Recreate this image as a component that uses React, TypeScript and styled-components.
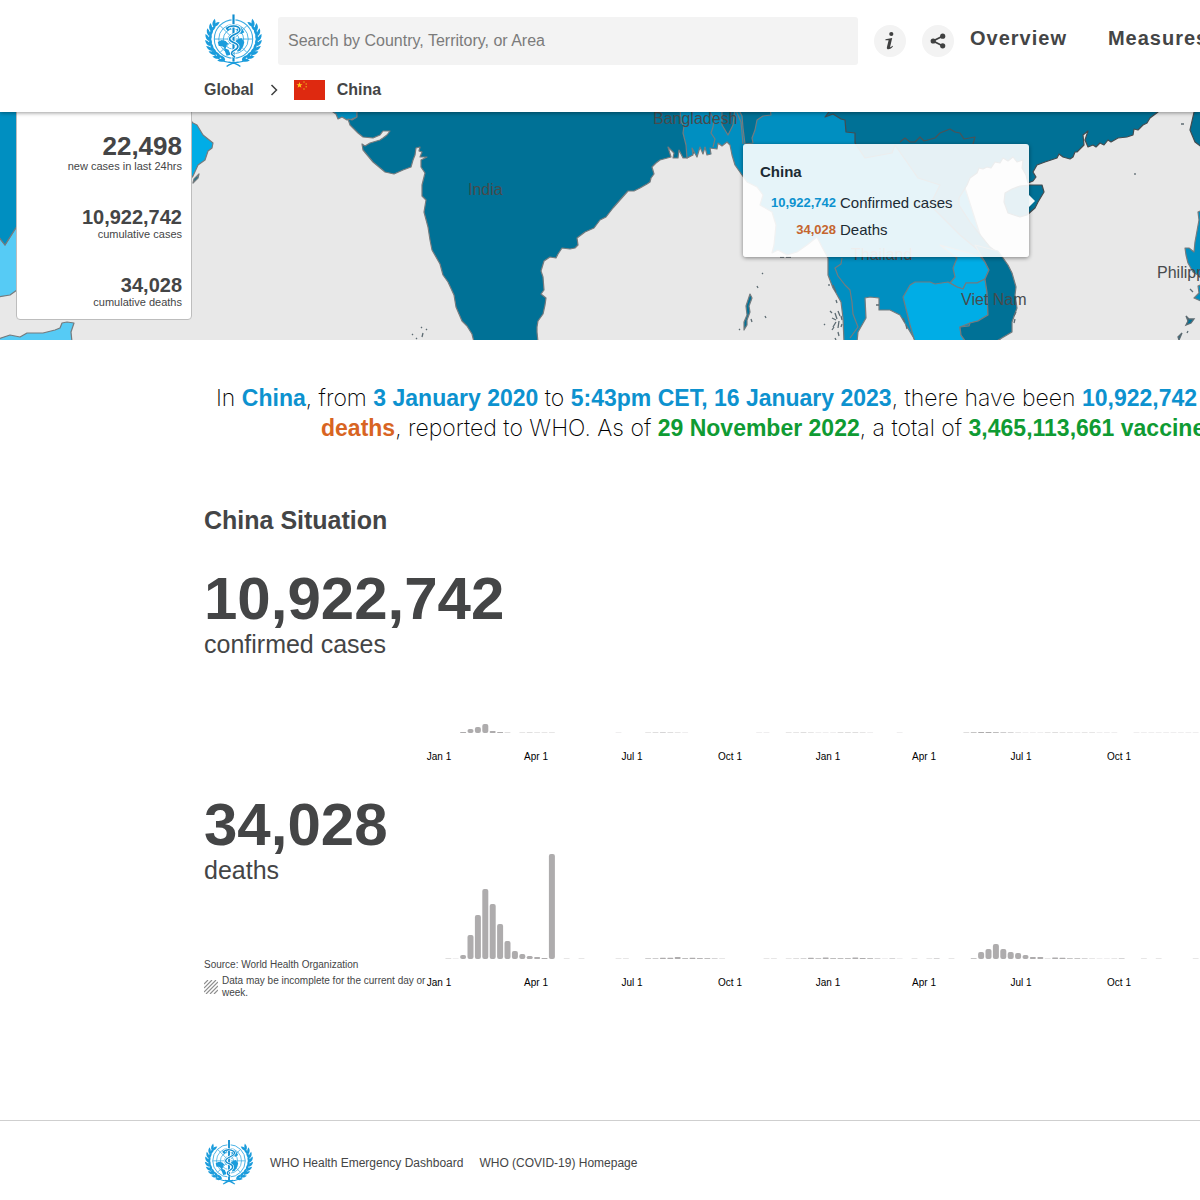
import React from "react";
import styled, { createGlobalStyle } from "styled-components";

const GlobalStyle = createGlobalStyle`
  *, *::before, *::after { box-sizing: border-box; }
  body {
    margin: 0;
    background: #fff;
    color: #444546;
    font-family: "Liberation Sans", Arial, Helvetica, sans-serif;
    overflow-x: hidden;
  }
`;

const Page = styled.div`
  overflow: hidden;
`;

/* ---------- header ---------- */

const Header = styled.header`
  position: relative;
  z-index: 2;
  background: #fff;
  padding: 15px 0 12px 204px;
  box-shadow: 0 1px 4px rgba(0, 0, 0, 0.4);
`;

const TopRow = styled.div`
  display: flex;
  align-items: center;
  height: 52px;
  white-space: nowrap;
`;

const LogoLink = styled.a`
  display: block;
  flex: none;
  line-height: 0;
`;

const SearchBox = styled.input`
  flex: 0 0 580px;
  height: 48px;
  margin: 0 16px 0 15px;
  padding: 0 10px;
  border: 0;
  border-radius: 3px;
  background: #f3f3f3;
  font: 16px "Liberation Sans", Arial, sans-serif;
  color: #444546;
  &::placeholder {
    color: #7b7b7b;
    opacity: 1;
  }
`;

const RoundButton = styled.button`
  flex: none;
  display: flex;
  align-items: center;
  justify-content: center;
  width: 32px;
  height: 32px;
  margin-right: 16px;
  padding: 0;
  border: 0;
  border-radius: 50%;
  background: #f3f3f3;
  color: #3f4040;
`;

const Nav = styled.nav`
  display: flex;
  gap: 41px;
  padding-bottom: 6px;
`;

const NavLink = styled.a`
  color: #444546;
  font-size: 20px;
  font-weight: 700;
  letter-spacing: 1px;
  text-decoration: none;
`;

const Crumbs = styled.nav`
  display: flex;
  align-items: center;
  height: 20px;
  margin-top: 13px;
  font-size: 16px;
  font-weight: 700;
`;

const CrumbLink = styled.a`
  color: #444546;
  text-decoration: none;
`;

const Chevron = styled.svg`
  margin: 0 15px;
`;

const Flag = styled.svg`
  margin-right: 12px;
`;

/* ---------- map ---------- */

const MapSection = styled.section`
  position: relative;
  height: 228px;
  overflow: hidden;
  background: #e8e8e8;
`;

const MapDrawing = styled.svg`
  display: block;
  width: 100%;
  height: 100%;
  text {
    font-family: "Liberation Sans", Arial, sans-serif;
    font-size: 16px;
    fill: #474b4d;
  }
`;

const StatCard = styled.dl`
  position: absolute;
  left: 16px;
  bottom: 20px;
  width: 176px;
  margin: 0;
  padding: 40px 9px 10px;
  display: flex;
  flex-direction: column;
  gap: 33px;
  border: 1px solid #bdbdbd;
  border-radius: 4px;
  background: #fff;
  text-align: right;
`;

const Stat = styled.div`
  display: flex;
  flex-direction: column-reverse;
`;

const StatLabel = styled.dt`
  font-size: 11px;
  line-height: 13px;
`;

const StatValue = styled.dd<{ $large?: boolean }>`
  margin: 0;
  font-size: ${(p) => (p.$large ? 26 : 20)}px;
  line-height: ${(p) => (p.$large ? 28 : 22)}px;
  font-weight: 700;
`;

const Tooltip = styled.div`
  position: absolute;
  left: 743px;
  top: 32px;
  width: 286px;
  padding: 19px 17px 17px;
  border-radius: 3px;
  background: rgba(255, 255, 255, 0.9);
  box-shadow: 0 1px 4px rgba(0, 0, 0, 0.45);
  color: #1b2a33;
  &::after {
    content: "";
    position: absolute;
    left: 100%;
    top: 50%;
    margin-top: -6px;
    border: 6px solid transparent;
    border-right: 0;
    border-left-color: rgba(255, 255, 255, 0.95);
  }
`;

const TooltipTitle = styled.h3`
  margin: 0 0 12px;
  font-size: 15px;
  line-height: 18px;
`;

const TooltipRow = styled.div`
  display: grid;
  grid-template-columns: 76px 1fr;
  column-gap: 4px;
  align-items: center;
  font-size: 15px;
  line-height: 20px;
  & + & {
    margin-top: 7px;
  }
`;

const TooltipValue = styled.strong<{ $tone: string }>`
  color: ${(p) => p.$tone};
  font-size: 13px;
  text-align: right;
`;

/* ---------- body ---------- */

const Intro = styled.p`
  margin: 0;
  padding: 43px 0 0 216px;
  color: #000;
  font-family: Inter, "Liberation Sans", sans-serif;
  font-size: 23px;
  font-weight: 200;
  line-height: 30px;
  white-space: nowrap;
`;

const IntroLine = styled.span<{ $indent?: number }>`
  display: block;
  padding-left: ${(p) => p.$indent || 0}px;
`;

const Mark = styled.strong<{ $tone: string }>`
  color: ${(p) => p.$tone};
  font-family: "Liberation Sans", Arial, sans-serif;
  font-weight: 700;
`;

const Situation = styled.main`
  padding: 62px 0 0 204px;
`;

const SituationTitle = styled.h2`
  margin: 0 0 33px;
  font-size: 25px;
  line-height: 30px;
`;

const MetricRow = styled.section`
  display: grid;
  grid-template-columns: 222px 1fr;
  height: 226px;
`;

const MetricInfo = styled.div`
  display: flex;
  flex-direction: column;
  white-space: nowrap;
`;

const MetricValue = styled.div`
  font-size: 60px;
  font-weight: 700;
  line-height: 61px;
`;

const MetricLabel = styled.div`
  font-size: 25px;
  line-height: 30px;
`;

const Source = styled.div`
  margin-top: 74px;
  font-size: 10px;
  line-height: 12px;
`;

const Note = styled.div`
  display: flex;
  align-items: center;
  gap: 4px;
  margin-top: 4px;
  font-size: 10px;
  line-height: 12px;
`;

const NoteSwatch = styled.svg`
  flex: none;
`;

const ChartFrame = styled.div`
  min-width: 0;
  overflow: hidden;
`;

const ChartSvg = styled.svg`
  display: block;
  text {
    font-family: "Liberation Sans", Arial, sans-serif;
    font-size: 10px;
    fill: #000;
    text-anchor: middle;
  }
`;

const Footer = styled.footer`
  display: flex;
  align-items: center;
  margin-top: 100px;
  padding: 18px 0 12px 204px;
  border-top: 1px solid #cfcfcf;
`;

const FooterLink = styled.a`
  margin-left: 16px;
  color: #444546;
  font-size: 12px;
  text-decoration: none;
`;

/* ---------- drawings ---------- */

const LEAF = "M0 0C2.100-1.600 2.200-4.800 0-8C-1.900-5-1.900-2 0 0Z";

function Emblem({ width, height }: { width: number; height: number }) {
  const angles = [20, 33, 46, 59, 72, 85, 98, 111, 124];
  const branch = angles.map((a) => {
    const t = (a * Math.PI) / 180;
    const x = 30 - Math.sin(t) * 25;
    const y = 25 + Math.cos(t) * 23;
    return (
      <g key={a} transform={`translate(${x} ${y})`}>
        <path d={LEAF} transform={`rotate(${a - 112})`} />
        <path d={LEAF} transform={`rotate(${a - 68})`} />
      </g>
    );
  });
  return (
    <svg width={width} height={height} viewBox="0 0 60 54" role="img" aria-label="World Health Organization">
      <g fill="#1a9cdc">
        {branch}
        <g transform="matrix(-1 0 0 1 60 0)">{branch}</g>
      </g>
      <circle cx="30" cy="25" r="20.500" fill="#fff" />
      <g fill="none" stroke="#3aabe2">
        <circle cx="30" cy="25" r="19.500" strokeWidth="1.100" />
        <g strokeWidth=".9">
          <circle cx="30" cy="25" r="15" />
          <circle cx="30" cy="25" r="10.300" />
          <circle cx="30" cy="25" r="5.500" />
          <path d="M10.500 25H49.500M16.200 11.200L43.800 38.800M43.800 11.200L16.200 38.800" />
        </g>
      </g>
      <g fill="none" stroke="#1a9cdc">
        <path d="M30 49C20 50 11 44 8 36M30 49C40 50 49 44 52 36" strokeWidth="1.200" />
        <path d="M23 53C26 50.500 30 49 35 48.500M37 53C34 50.500 30 49 25 48.500" strokeWidth="1.400" />
      </g>
      <g fill="#1a9cdc">
        <path d="M14 28l4-2 4 1 3 3-2 1-1 4-4-3-3 0zM20 34l5 2 2 5-4 1zM33 26l5-2 3 4-1 4-3 5-3 1-1-5-2-3zM22 13l6-3 1 3-5 4zM34 12l4 1 3 5-3 2-5-2z" />
      </g>
      <path d="M30 3V48" stroke="#fff" strokeWidth="4" />
      <path d="M30 0V48" stroke="#0f8dcf" strokeWidth="2.200" />
      <path d="M24 14C26 10.500 35 11 36.500 15C38 20 26 20 26 25C26 29 34.500 28 34.500 32.500C34.500 36.500 28 36 28 39.500C28 41.500 30 42 31 43" fill="none" stroke="#fff" strokeWidth="3.200" />
      <path d="M23 14.500C26 10.500 35 11 36.500 15C38 20 26 20 26 25C26 29 34.500 28 34.500 32.500C34.500 36.500 28 36 28 39.500C28 41.500 30 42 31 43" fill="none" stroke="#0f8dcf" strokeWidth="1.600" strokeLinecap="round" />
    </svg>
  );
}

const DARK = "#007196";
const MID = "#008fc1";
const LIGHT = "#00ade6";
const PALE = "#56cbf5";

function RegionMap() {
  return (
    <MapDrawing viewBox="0 112 1200 228" preserveAspectRatio="xMinYMin slice" role="img" aria-label="Map of cases by country">
      <g stroke="#757b7e" strokeWidth="1.200" strokeLinejoin="round">
        {/* Arabian peninsula and the Horn of Africa */}
        <path fill={PALE} d="M-2 236L5 245L17 226L60 200V280L17 290L10 295L-2 297Z" />
        <path fill={MID} d="M-2 108H40V215L17 226L5 245L-2 236Z" />
        <path fill={LIGHT} d="M185 115L193 123L197 125L203 135L213 143L212 148L208 151L205 160L198 165L193 176L185 185Z" />
        <path fill={DARK} d="M193 183L194 179L199 174L198 178Z" />
        <path fill={PALE} d="M-2 342V339L10 335L20 337L27 333L43 333L55 330L60 328L62 323L67 322L74 323L71 332L72 342Z" />
        {/* South Asia */}
        <path fill={MID} d="M331 108L333 112L336 114L338 119L342 117L347 120L352 119L357 117V108Z" />
        <path fill={DARK} d="M357 108V117L352 120L348 119L350 125L353 128L358 133L363 137L373 138L380 135L383 131L390 131L387 135L383 138L380 140L370 143L365 146L362 144L363 150L373 162L385 172L394 174L403 170L411 167L413 160L415 155L416 148L420 147L419 151L422 152L420 157L427 157L421 160L421 167L425 173L422 185L422 196L426 200L424 212L428 227L430 240L432 250L440 264L443 275L448 282L454 295L456 307L462 321L467 326L472 334L474 342H538L537 332L537 327L538 321L543 314L545 305L546 298L541 294L544 290L543 277L541 271L544 261L550 257L556 258L558 254L562 248L570 249L575 248L578 245L577 238L585 232L594 228L600 220L606 217L613 208L620 200L628 191L634 191L640 188L647 184L650 182L651 178L654 174L652 167L656 163L660 160L671 157L668 147L674 153L673 158L678 158L679 150L683 158L687 158L726 130L760 135V108Z" />
        <path fill={MID} d="M680 108L681 122L684 126L683 133L686 145L687 158L693 155L692 148L697 157L700 147L703 154L705 147L707 155L711 154L710 148L717 149L718 143L722 146L727 142L730 145L732 155L735 165L742 175L747 182L757 187L763 195L760 205L772 212L776 225L774 245L772 253L778 250L787 255L797 252L807 245L817 237L822 247L828 258L828 275L833 288L836 293L841 302L843 318L844 342H857L858 332L866 318L865 298L870 297L879 298L879 310L890 310L900 315L915 340H1000L985 250L940 110Z" />
        <path fill={DARK} d="M738 108L742 116L743 128L745 144L753 143L752 138L755 130L757 120L763 116L771 115L770 108ZM722 108L722 125L728 135L733 125L735 108Z" />
        {/* China and northern Viet Nam */}
        <path fill={DARK} stroke="#444c50" d="M832 108L825 117L833 114L841 119L845 120L846 132L855 133L855 143L865 158L892 153L895 145L918 178L940 185L930 205L960 235L985 256L998 253L990 247L970 222L959 205L959 198L967 185L970 178L977 173L979 168L983 169L987 167L991 168L995 162L1000 163L1003 158L1008 161L1013 157L1017 162L1023 160L1022 168L1026 175L1028 183L1033 181L1036 177L1033 172L1037 165L1045 162L1051 160L1057 158L1059 154L1063 157L1070 159L1073 157L1075 152L1077 152L1084 145L1083 135L1088 131L1086 137L1085 140L1088 147L1093 145L1096 147L1100 143L1104 145L1108 140L1111 142L1118 138L1127 137L1133 135L1134 129L1138 130L1143 125L1147 123L1150 118L1158 112V108Z" />
        <path fill="none" d="M900 142L905 138L910 142L915 142L920 137L924 141L935 138L940 133L950 129L955 132L960 133L964 139L975 137L973 144" stroke="#4b5357" />
        <path fill="none" d="M710 112L714 120L713 127L711 133L715 139L713 147M735 108L741 122L743 144" />
        {/* Indochina */}
        <path fill={LIGHT} d="M940 245L957 258L953 268L955 277L950 283L957 287L963 289L966 283L977 283L985 279L989 270L985 262L980 256Z" />
        <path fill={LIGHT} d="M903 297L910 285L915 282L930 282L935 284L948 282L957 287L963 289L966 283L977 283L985 279L987 292L988 315L978 321L970 323L960 327L961 335L966 342H915L910 325L907 313Z" />
        <path fill={DARK} d="M975 245L982 257L985 262L989 270L985 279L987 292L988 315L978 321L970 323L969 326L960 327L961 335L966 342H995L1012 332L1012 322L1017 308L1015 295L1016 287L1012 273L1008 265L998 251Z" />
        <path fill="none" d="M842 258L841 264L835 268L838 276L845 285L850 290L852 302L853 314L858 327L850 338" />
        {/* Hainan, Taiwan and the Philippines */}
        <path fill={DARK} stroke="#444c50" d="M1005 193L1012 189L1020 186L1030 185L1042 185L1044 192L1038 202L1035 208L1027 215L1020 217L1008 213L1004 202Z" />
        <path fill={DARK} stroke="#444c50" d="M1195 108L1190 130L1195 142L1203 148V108Z" />
        <path fill={MID} d="M1203 210L1198 212L1199 220L1195 242L1194 252L1189 248L1185 248L1186 255L1188 263L1193 272L1203 278ZM1203 284L1198 286L1199 293L1194 298L1203 302Z" />
        <path fill={DARK} d="M750 294L752 298L749 306L750 312L747 320L747 325L744 330L744 322L747 315L746 306Z" />
      </g>
      <g fill="none" stroke="#5d6b72" strokeWidth="1.300">
        <path d="M412 334l1 1M416 338l1 1M421 327l1 1M423 333l-1 4M426 329l1 1M102 319h3m2 0h2M762 273l1 1M757 286l1 2M765 316l1 2M739 329l1 1M751 319l1 3M780 257h4m2 0h5" />
        <path d="M833 285l3 7M829 284v2M836 300l1 3M830 311l2 2M835 313l2 6M838 311l2 5M832 318l4 2M836 322l-3 5M839 321l-1 7M824 324l1 1M841 316l1 4M834 327l-2 3M838 332l1 4M835 338l1 2M842 324l-1 3M876 305h3M903 318l2 4M906 325l1 4" />
        <path d="M1135 173v2M1181 124h3M1190 289l3 3M1016 312l-2 4M1015 319l-1 4" />
        <path fill={DARK} d="M1186 316l3 3l5 0l-3 4l-5 2l2-4zM1188 331l-1 2M1182 333l-3 7l-1-3z" />
      </g>
      <text x="653" y="124">Bangladesh</text>
      <text x="468" y="195">India</text>
      <text x="851" y="260">Thailand</text>
      <text x="961" y="305">Viet Nam</text>
      <text x="1157" y="278">Philippines</text>
    </MapDrawing>
  );
}

/* Weekly bar heights; the first entry is the week of 6 January 2020. */
const CASES: number[] = [
  0, 0, 1, 4, 6, 9, 2, 1, 0.4, 0, 0.3, 0.4, 0.3, 0.3, 0.3,
  0, 0, 0, 0, 0, 0, 0, 0, 0.2, 0, 0, 0, 0.3, 0.4, 0.5, 0.4, 0.3, 0.2,
  0, 0, 0, 0, 0, 0, 0, 0, 0, 0.2, 0.2, 0, 0, 0.3, 0.3, 0.4, 0.3, 0.2, 0.2, 0.2, 0.4, 0.4, 0.4, 0.3, 0.2,
  0, 0, 0, 0.2, 0, 0, 0, 0, 0, 0, 0, 0, 0.4, 0.7, 1, 1, 0.8, 0.6, 0.5, 0.3, 0.2, 0.2, 0.2, 0.3, 0.4, 0.3,
  0.3, 0.2, 0.3, 0.3, 0.2, 0.2, 0.2, 0, 0, 0.2, 0.2, 0.2, 0.2, 0.2, 0.2, 0.2, 0.2, 0.2,
];

const DEATHS: number[] = [
  0.4, 0.2, 4, 24, 44, 70, 55, 35, 18, 8, 5, 3, 2, 1, 105,
  0, 0.3, 0, 0.3, 0, 0, 0, 0, 0.3, 0.3, 0, 0, 0.6, 0.6, 1.3, 1.3, 2, 0.8, 1.3, 0.9, 0.8, 0.5, 0.3,
  0, 0, 0, 0, 0, 0.3, 0.3, 0, 0.3, 0.4, 0.5, 1.3, 0.7, 1.5, 0.8, 0.8, 0.8, 1.4, 1, 0.8, 0.5, 0.2, 0.5, 0.2, 0,
  0.3, 0, 0.3, 0.5, 0, 0.3, 0, 0, 0.7, 7, 10, 15, 10, 7, 6, 4, 2, 2, 0.3, 1.4, 1.2, 0.7, 0.7, 0.5,
  0.3, 0.2, 0.2, 0.3, 0.5, 0, 0, 0.3, 0, 0.3, 0, 0, 0, 0, 0.3,
];

const TICKS: [number, string][] = [
  [13, "Jan 1"], [110, "Apr 1"], [206, "Jul 1"], [304, "Oct 1"],
  [402, "Jan 1"], [498, "Apr 1"], [595, "Jul 1"], [693, "Oct 1"],
];

function WeeklyChart({ data, label }: { data: number[]; label: string }) {
  return (
    <ChartFrame>
      <ChartSvg width="1000" height="200" role="img" aria-label={label}>
        {data.map((value, i) => {
          if (value === 0) return null;
          const h = Math.max(value, 1);
          return (
            <rect
              key={i}
              x={19.3 + i * 7.4}
              y={165 - h}
              width="6"
              height={h}
              rx={Math.min(2, h / 2)}
              fill="#aeacad"
              opacity={Math.min(value, 1)}
            />
          );
        })}
        {TICKS.map(([x, text]) => (
          <text key={x} x={x} y="192">{text}</text>
        ))}
      </ChartSvg>
    </ChartFrame>
  );
}

const BLUE = "#0d92cf";
const ORANGE = "#d86422";
const GREEN = "#0f9b33";

export default function App() {
  return (
    <Page>
      <GlobalStyle />
      <Header>
        <TopRow>
          <LogoLink href="#" aria-label="Home"><Emblem width={59} height={54} /></LogoLink>
          <SearchBox type="search" aria-label="Search" placeholder="Search by Country, Territory, or Area" />
          <RoundButton aria-label="Information">
            <svg width="12" height="20" viewBox="0 0 12 20" fill="currentColor">
              <circle cx="7.300" cy="3" r="2.100" />
              <path d="M1.500 8.200L8.200 7L6.200 15.600C6 16.700 7 16.200 8.300 14.700L9 15.300C7.200 18.300 2.200 19.800 2.900 16.200L4.600 9.300L1.400 9.200Z" />
            </svg>
          </RoundButton>
          <RoundButton aria-label="Share">
            <svg width="16" height="16" viewBox="0 0 16 16" fill="currentColor">
              <path d="M13 3L3 8L13 13" fill="none" stroke="currentColor" strokeWidth="1.800" />
              <circle cx="12.700" cy="3.200" r="2.600" />
              <circle cx="3.200" cy="8" r="2.600" />
              <circle cx="12.700" cy="12.800" r="2.600" />
            </svg>
          </RoundButton>
          <Nav aria-label="Main">
            <NavLink href="#">Overview</NavLink>
            <NavLink href="#">Measures</NavLink>
          </Nav>
        </TopRow>
        <Crumbs aria-label="Breadcrumb">
          <CrumbLink href="#">Global</CrumbLink>
          <Chevron width="10" height="12" viewBox="0 0 10 12" fill="none" stroke="#3f4040" strokeWidth="1.500">
            <path d="M2.500 1L7.500 6L2.500 11" />
          </Chevron>
          <Flag width="31" height="20" viewBox="0 0 31 20" aria-hidden="true">
            <rect width="31" height="20" fill="#de2910" />
            <path fill="#ffc61a" d="M5.500 2l.8 2.200h2.300l-1.900 1.400.7 2.200-1.900-1.400-1.900 1.400.7-2.200L2.400 4.200h2.300z" />
            <g fill="#e9a01a">
              <circle cx="10" cy="2" r=".8" /><circle cx="12.200" cy="4" r=".8" />
              <circle cx="12.200" cy="6.800" r=".8" /><circle cx="10" cy="9" r=".8" />
            </g>
          </Flag>
          <span>China</span>
        </Crumbs>
      </Header>

      <MapSection>
        <RegionMap />
        <StatCard>
          <Stat><StatLabel>new cases in last 24hrs</StatLabel><StatValue $large>22,498</StatValue></Stat>
          <Stat><StatLabel>cumulative cases</StatLabel><StatValue>10,922,742</StatValue></Stat>
          <Stat><StatLabel>cumulative deaths</StatLabel><StatValue>34,028</StatValue></Stat>
        </StatCard>
        <Tooltip role="tooltip">
          <TooltipTitle>China</TooltipTitle>
          <TooltipRow><TooltipValue $tone={BLUE}>10,922,742</TooltipValue><span>Confirmed cases</span></TooltipRow>
          <TooltipRow><TooltipValue $tone="#c5652f">34,028</TooltipValue><span>Deaths</span></TooltipRow>
        </Tooltip>
      </MapSection>

      <Intro>
        <IntroLine>
          In <Mark $tone={BLUE}>China</Mark>, from <Mark $tone={BLUE}>3 January 2020</Mark> to{" "}
          <Mark $tone={BLUE}>5:43pm CET, 16 January 2023</Mark>, there have been{" "}
          <Mark $tone={BLUE}>10,922,742</Mark>
        </IntroLine>
        <IntroLine $indent={105}>
          <Mark $tone={ORANGE}>deaths</Mark>, reported to WHO. As of{" "}
          <Mark $tone={GREEN}>29 November 2022</Mark>, a total of{" "}
          <Mark $tone={GREEN}>3,465,113,661 vaccine doses</Mark>
        </IntroLine>
      </Intro>

      <Situation>
        <SituationTitle>China Situation</SituationTitle>
        <MetricRow>
          <MetricInfo>
            <MetricValue>10,922,742</MetricValue>
            <MetricLabel>confirmed cases</MetricLabel>
          </MetricInfo>
          <WeeklyChart data={CASES} label="Confirmed cases by week" />
        </MetricRow>
        <MetricRow>
          <MetricInfo>
            <MetricValue>34,028</MetricValue>
            <MetricLabel>deaths</MetricLabel>
            <Source>Source: World Health Organization</Source>
            <Note>
              <NoteSwatch width="14" height="14" viewBox="0 0 14 14" stroke="#8f8f8f" strokeWidth="1.200">
                <path d="M0 4L4 0M0 8L8 0M0 12L12 0M2 14L14 2M6 14L14 6M10 14L14 10" />
              </NoteSwatch>
              <span>Data may be incomplete for the current day or<br />week.</span>
            </Note>
          </MetricInfo>
          <WeeklyChart data={DEATHS} label="Deaths by week" />
        </MetricRow>
      </Situation>

      <Footer>
        <LogoLink href="#" aria-label="World Health Organization"><Emblem width={50} height={47} /></LogoLink>
        <FooterLink href="#">WHO Health Emergency Dashboard</FooterLink>
        <FooterLink href="#">WHO (COVID-19) Homepage</FooterLink>
      </Footer>
    </Page>
  );
}
